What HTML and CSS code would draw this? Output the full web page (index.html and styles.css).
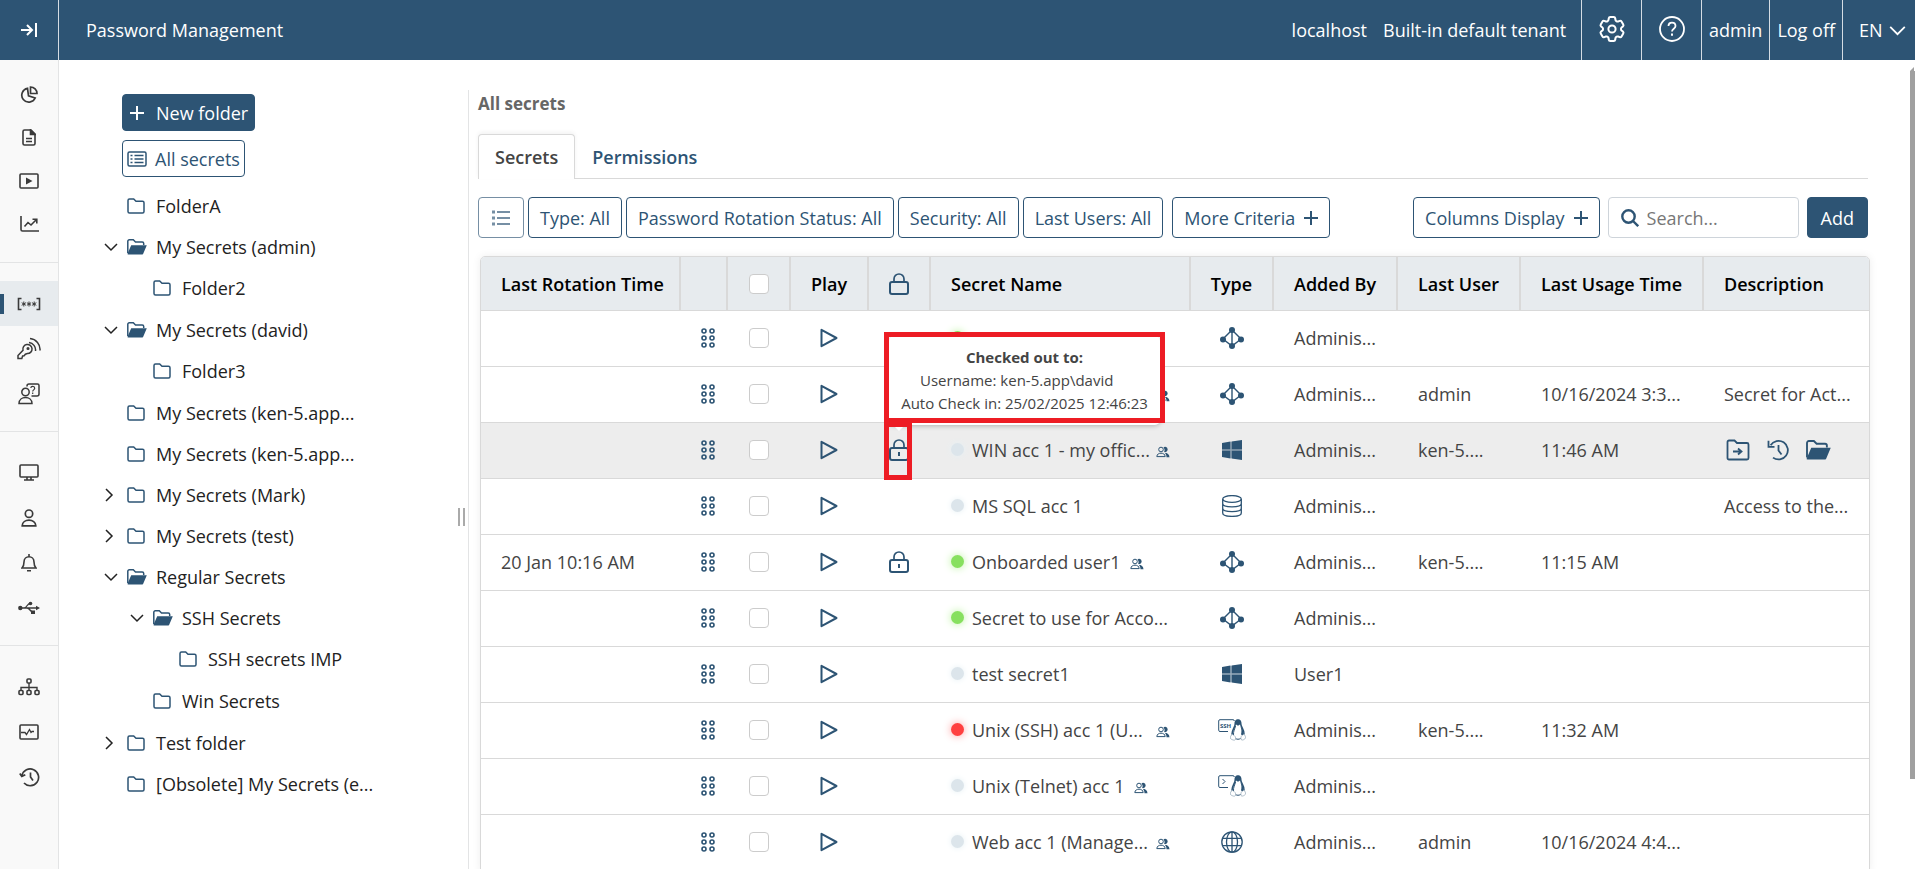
FILE: index.html
```html
<!DOCTYPE html>
<html lang="en">
<head>
    <meta charset="UTF-8">
    <meta name="viewport" content="width=device-width, initial-scale=1.0">
    <title>Password Management</title>
    <link rel="stylesheet" href="styles.css">
</head>
<body>
    <!-- Icon set -->
    <svg class="icon-defs" aria-hidden="true">
        <symbol id="i-folder" viewBox="0 0 18 16"><path d="M1 13.5v-11A1.5 1.5 0 0 1 2.5 1h4.2L9 3.3h6.5A1.5 1.5 0 0 1 17 4.8v8.7a1.5 1.5 0 0 1-1.5 1.5h-13A1.5 1.5 0 0 1 1 13.5z" fill="none" stroke="currentColor" stroke-width="1.5"/></symbol>
        <symbol id="i-folder-open" viewBox="0 0 20 16"><path d="M.8 14V2.3A1.5 1.5 0 0 1 2.3.8h4L8.5 3h6.7a1.5 1.5 0 0 1 1.5 1.5V6" fill="none" stroke="currentColor" stroke-width="1.5"/><path d="M4.2 6.2h15.6l-3.6 8.6a1 1 0 0 1-.9.7H1.2a.7.7 0 0 1-.6-1z" fill="currentColor"/></symbol>
        <symbol id="i-down" viewBox="0 0 14 14"><path d="M1 4l6 6 6-6" fill="none" stroke="currentColor" stroke-width="1.5"/></symbol>
        <symbol id="i-right" viewBox="0 0 14 14"><path d="M2 1l6 6-6 6" fill="none" stroke="currentColor" stroke-width="1.5"/></symbol>
        <symbol id="i-plus" viewBox="0 0 14 14"><path d="M7 0v14M0 7h14" fill="none" stroke="currentColor" stroke-width="2"/></symbol>
        <symbol id="i-lock-open" viewBox="0 0 20 22"><rect x="1" y="9" width="18" height="12" rx="2" fill="none" stroke="currentColor" stroke-width="2"/><path d="M5 9V6a5 5 0 0 1 10 0v3" fill="none" stroke="currentColor" stroke-width="1.7"/></symbol>
        <symbol id="i-lock" viewBox="0 0 20 22"><rect x="1" y="9" width="18" height="12" rx="2" fill="none" stroke="currentColor" stroke-width="2"/><path d="M5 9V6a5 5 0 0 1 10 0v3" fill="none" stroke="currentColor" stroke-width="1.7"/><path d="M10 13v4" stroke="currentColor" stroke-width="2"/></symbol>
        <symbol id="i-drag" viewBox="0 0 14 20"><g fill="none" stroke="currentColor" stroke-width="1.6"><circle cx="3" cy="3" r="2"/><circle cx="11" cy="3" r="2"/><circle cx="3" cy="10" r="2"/><circle cx="11" cy="10" r="2"/><circle cx="3" cy="17" r="2"/><circle cx="11" cy="17" r="2"/></g></symbol>
        <symbol id="i-play" viewBox="0 0 18 20"><path d="M1.5 1.8v16.4L16.5 10z" fill="none" stroke="currentColor" stroke-width="2" stroke-linejoin="round"/></symbol>
        <symbol id="i-users" viewBox="0 0 14 12"><circle cx="5" cy="3.5" r="2.3" fill="none" stroke="currentColor" stroke-width="1"/><path d="M.8 10.6C1 8 3 7.2 5 7.2s4 .8 4.2 3.4z" fill="none" stroke="currentColor" stroke-width="1"/><path d="M7.5 1.4a2.6 2.6 0 1 1 .6 4.5 4 4 0 0 0-.6-4.5zM8.5 6.8c3 0 4.800 1.500 5 4.500h-3c0-2-.6-3.500-2-4.500z" fill="currentColor"/></symbol>
        <symbol id="i-ad" viewBox="0 0 24 22"><path d="M12 3L3 12l9 7 9-7zM12 3v16" fill="none" stroke="currentColor" stroke-width="1.4"/><g fill="currentColor"><circle cx="12" cy="3" r="3"/><circle cx="3" cy="12.5" r="3"/><circle cx="21" cy="12.5" r="3"/><circle cx="12" cy="19" r="3"/></g></symbol>
        <symbol id="i-windows" viewBox="0 0 20 20"><path d="M0 3l8.5-1.4v7.9H0zM9.5 1.4L20 0v9.5H9.5zM0 10.5h8.5v7.9L0 17zM9.5 10.5H20V20L9.500 18.6z" fill="currentColor"/><path d="M0 10h20M9 2v16" stroke="currentColor" stroke-width="1" opacity=".45"/></symbol>
        <symbol id="i-db" viewBox="0 0 20 22"><g fill="none" stroke="currentColor" stroke-width="1.3"><ellipse cx="10" cy="4" rx="9.3" ry="3.4"/><path d="M.7 4v14c0 4.5 18.6 4.5 18.6 0V4M.7 8.5c0 4.5 18.6 4.5 18.6 0M.7 13.2c0 4.5 18.6 4.5 18.6 0"/></g></symbol>
        <symbol id="i-penguin" viewBox="0 0 16 22"><path d="M8 1c2.2 0 2.8 2 2.8 4.2 0 3 3.600 5.400 3.200 10.300M8 1C5.800 1 5.200 3 5.200 5.200c0 3-3.400 5.600-3.200 10.300" fill="none" stroke="currentColor" stroke-width="1.6"/><path d="M5.300 5C5.300 1.500 6.500.8 8 .8s2.800.7 2.800 4.200L8 6.800zM10.500 7.500c2.500 2.500 3.500 6 2.500 9l-2-1c.8-3 .5-5.500-.5-8z" fill="currentColor"/><path d="M5.500 7c-.6 3-2.300 5-2 9M5.500 19.500c1.500 1 3.500 1 5 0" fill="none" stroke="currentColor" stroke-width="1"/><path d="M2.500 15.500C.5 16 .3 18 .5 19.500c1.500 1.500 4 2.300 5 1 1-1.600-1-4.500-3-5zM13.500 15.500c-2 .5-3 2.500-2.500 5 1.500 1.500 4-.5 4.700-1.500-.2-1.500-.7-3.500-2.200-3.500z" fill="#fff" stroke="currentColor" stroke-width=".6" stroke-opacity=".6"/></symbol>
        <symbol id="i-globe" viewBox="0 0 22 22"><g fill="none" stroke="currentColor" stroke-width="1.3"><circle cx="11" cy="11" r="10.2"/><ellipse cx="11" cy="11" rx="5.5" ry="10.2"/><path d="M11 1v20M1.800 7.300h18.400M1.800 14.700h18.400"/></g></symbol>
        <symbol id="i-history" viewBox="0 0 22 22"><path d="M3.6 6.3A9.3 9.3 0 1 1 6 18.6M11.5 6v5.5l3 4" fill="none" stroke="currentColor" stroke-width="1.8"/><path d="M1.500 1.800v6h6" fill="none" stroke="currentColor" stroke-width="1.8"/></symbol>
    </svg>

    <!-- Header -->
    <header class="topbar">
        <button class="menu-toggle" aria-label="Expand menu">
            <svg width="18" height="16" viewBox="0 0 18 16" fill="none" stroke="currentColor" stroke-width="2"><path d="M1 8h11M7 3l5 5-5 5M16 1v14"/></svg>
        </button>
        <div class="app-name">Password Management</div>
        <div class="tenant"><span>localhost</span><span>Built-in default tenant</span></div>
        <button class="top-icon" aria-label="Settings">
            <svg width="32" height="32" viewBox="0 0 24 24" fill="none" stroke="currentColor" stroke-width="1.5"><path d="M9.594 3.94c.09-.542.56-.94 1.11-.94h2.593c.55 0 1.02.398 1.11.94l.213 1.281c.063.374.313.686.645.87.074.04.147.083.22.127.325.196.72.257 1.075.124l1.217-.456a1.125 1.125 0 0 1 1.37.49l1.296 2.247a1.125 1.125 0 0 1-.26 1.431l-1.003.827c-.293.241-.438.613-.43.992a7.723 7.723 0 0 1 0 .255c-.008.378.137.75.43.991l1.004.827c.424.35.534.955.26 1.43l-1.298 2.247a1.125 1.125 0 0 1-1.369.491l-1.217-.456c-.355-.133-.75-.072-1.076.124a6.47 6.47 0 0 1-.22.128c-.331.183-.581.495-.644.869l-.213 1.281c-.09.543-.56.94-1.11.94h-2.594c-.55 0-1.019-.398-1.11-.94l-.213-1.281c-.062-.374-.312-.686-.644-.87a6.52 6.52 0 0 1-.22-.127c-.325-.196-.72-.257-1.076-.124l-1.217.456a1.125 1.125 0 0 1-1.369-.49l-1.297-2.247a1.125 1.125 0 0 1 .26-1.431l1.004-.827c.292-.24.437-.613.43-.991a6.932 6.932 0 0 1 0-.255c.007-.38-.138-.751-.43-.992l-1.004-.827a1.125 1.125 0 0 1-.26-1.43l1.297-2.247a1.125 1.125 0 0 1 1.37-.491l1.216.456c.356.133.751.072 1.076-.124.072-.044.146-.086.22-.128.332-.183.582-.495.644-.869l.214-1.28z"/><circle cx="12" cy="12" r="2.7"/></svg>
        </button>
        <button class="top-icon" aria-label="Help">
            <svg width="26" height="26" viewBox="0 0 26 26" fill="none" stroke="currentColor" stroke-width="1.8"><circle cx="13" cy="13" r="12"/><path d="M9.500 10c0-4.500 7-4.500 7 0 0 2.700-3.500 2.700-3.500 5.500"/><path d="M13 17.500v2.200" stroke-width="2"/></svg>
        </button>
        <a class="top-link" href="#">admin</a>
        <a class="top-link" href="#">Log off</a>
        <button class="language">EN <svg width="17" height="17"><use href="#i-down"/></svg></button>
    </header>

    <div class="page">
        <!-- Left menu -->
        <nav class="sidebar">
            <div class="menu-group first">
                <a href="#" aria-label="Dashboard"><svg width="18" height="18" viewBox="0 0 18 18" fill="none" stroke="currentColor" stroke-width="1.7"><path d="M7.500 2.300A7 7 0 1 0 15.200 12L8.500 9.800z"/><path d="M10.500 1a6.500 6.500 0 0 1 6.500 6.500h-6.500z"/></svg></a>
                <a href="#" aria-label="Reports"><svg width="14" height="17" viewBox="0 0 14 17" fill="none" stroke="currentColor" stroke-width="1.6"><path d="M1 2.500A1.500 1.500 0 0 1 2.500 1H9l4 4v9.500a1.500 1.500 0 0 1-1.500 1.500h-9A1.500 1.500 0 0 1 1 14.500z"/><path d="M8.500 1v4.500H13z" fill="currentColor"/><path d="M4 9.500h6M4 12.500h6" stroke-width="1.4"/></svg></a>
                <a href="#" aria-label="Sessions"><svg width="20" height="16" viewBox="0 0 20 16" fill="none" stroke="currentColor" stroke-width="1.6"><rect x="1" y="1" width="18" height="14" rx="1"/><path d="M7 4.500v7L13.500 8z" fill="currentColor" stroke="none"/></svg></a>
                <a href="#" aria-label="Statistics"><svg width="19" height="17" viewBox="0 0 19 17" fill="none" stroke="currentColor" stroke-width="1.6"><path d="M1 1v13.500A1.500 1.500 0 0 0 2.500 16H19M4.500 11.500L8 7.500l3 2.500 5.500-5.500M12.500 4.300h4.300v4.300"/></svg></a>
            </div>
            <div class="menu-group">
                <a href="#" class="active" aria-label="Password Management"><svg width="24" height="14" viewBox="0 0 24 14" fill="none" stroke="currentColor" stroke-width="1.6"><path d="M4.500 1.500H1.500v11h3M19.500 1.500h3v11h-3"/><path d="M6.800 4.500v5M4.700 5.700l4.200 2.600M8.900 5.700L4.700 8.300M12 4.500v5M9.900 5.700l4.200 2.600M14.100 5.700L9.900 8.300M17.200 4.500v5M15.100 5.700l4.200 2.600M19.300 5.700l-4.200 2.600" stroke-width="1"/></svg></a>
                <a href="#" aria-label="Access keys"><svg width="24" height="24" viewBox="0 0 24 24" fill="none" stroke="currentColor" stroke-width="1.5"><path d="M6 13.200A4.600 4.600 0 1 1 10.400 16.600l-2 .6-1.300 1.500-1.500.3-.8 2.600H1v-3z"/><circle cx="11" cy="11.500" r=".8"/><path d="M12 5.500a7.500 7.500 0 0 1 6.500 8.500M13 1.500a11 11 0 0 1 10 12"/></svg></a>
                <a href="#" aria-label="Access requests"><svg width="22" height="22" viewBox="0 0 22 22" fill="none" stroke="currentColor" stroke-width="1.5"><circle cx="7.500" cy="9" r="3.700"/><path d="M1 20.500c0-8 13-8 13 0z"/><path d="M9 3.500V3a2 2 0 0 1 2-2h8.500a1.500 1.500 0 0 1 1.500 1.500V11a2 2 0 0 1-2 2h-5.500"/><path d="M12.800 5c.2-2.300 3.900-2.200 3.900.2 0 1.700-2 1.600-2 3.300M14.700 9.600v1.300" stroke-width="1.2"/></svg></a>
            </div>
            <div class="menu-group">
                <a href="#" aria-label="Clients"><svg width="20" height="17" viewBox="0 0 20 17" fill="none" stroke="currentColor" stroke-width="1.6"><rect x="1" y="1" width="18" height="12" rx="1"/><path d="M8 13v3M12 13v3M5 16h10"/></svg></a>
                <a href="#" aria-label="Users"><svg width="16" height="18" viewBox="0 0 16 18" fill="none" stroke="currentColor" stroke-width="1.7"><circle cx="8" cy="4.700" r="3.700"/><path d="M1.200 16.800c0-7.500 13.600-7.500 13.600 0z"/></svg></a>
                <a href="#" aria-label="Alerts"><svg width="16" height="18" viewBox="0 0 16 18" fill="none" stroke="currentColor" stroke-width="1.6"><path d="M1 14c2-2 2-3.500 2-6 0-7 10-7 10 0 0 2.500 0 4 2 6zM8 0v2.500M6 16.800h4"/></svg></a>
                <a href="#" aria-label="USB monitoring"><svg width="22" height="14" viewBox="0 0 22 14" fill="none" stroke="currentColor" stroke-width="1.3"><path d="M2 7h18M6 7c3 0 3-4.500 6-4.500M9 7c3 0 3 4 6 4"/><circle cx="2.300" cy="7" r="2.200" fill="currentColor" stroke="none"/><circle cx="12.500" cy="2.500" r="1.800" fill="currentColor" stroke="none"/><path d="M13 9.500h4v3.500h-4zM18 4.800l4 2.200-4 2.200z" fill="currentColor" stroke="none"/></svg></a>
            </div>
            <div class="menu-group last">
                <a href="#" aria-label="Structure"><svg width="22" height="18" viewBox="0 0 22 18" fill="none" stroke="currentColor" stroke-width="1.6"><rect x="9" y="1" width="4" height="4" rx="1"/><rect x="1" y="12.500" width="4" height="4" rx="1"/><rect x="9" y="12.500" width="4" height="4" rx="1"/><rect x="17" y="12.500" width="4" height="4" rx="1"/><path d="M11 5v7.500M3 12.500v-3h16v3" stroke-width="1.4"/></svg></a>
                <a href="#" aria-label="Health"><svg width="20" height="16" viewBox="0 0 20 16" fill="none" stroke="currentColor" stroke-width="1.6"><rect x="1" y="1" width="18" height="14" rx="1"/><path d="M2 8.500h4l1.500 2 3-5 1.500 3 1-1h2" stroke-width="1.3"/></svg></a>
                <a href="#" aria-label="History"><svg width="21" height="20" viewBox="0 0 21 20" fill="none" stroke="currentColor" stroke-width="1.7"><path d="M3 8.500a8.400 8.400 0 1 1 2 7.500M11.500 5.500V10l2.500 3.500M.8 6.500l2 3 3.500-1.800"/></svg></a>
            </div>
        </nav>

        <!-- Folder tree -->
        <aside class="folders">
            <div class="folder-panel">
                <button class="btn btn-primary new-folder"><svg width="14" height="14"><use href="#i-plus"/></svg>New folder</button>
                <button class="btn all-secrets"><svg width="20" height="16" viewBox="0 0 20 16" fill="none" stroke="currentColor" stroke-width="1.5"><rect x="1" y="1" width="18" height="14" rx="1.500"/><path d="M3.500 4.500h2M3.500 8h2M3.500 11.500h2M7.500 4.500h9M7.500 8h9M7.500 11.500h9"/></svg>All secrets</button>
                <ul class="tree">
                    <li><a href="#"><i></i><svg class="folder"><use href="#i-folder"/></svg>FolderA</a></li>
                    <li><a href="#"><i><svg><use href="#i-down"/></svg></i><svg class="folder open"><use href="#i-folder-open"/></svg>My Secrets (admin)</a>
                        <ul>
                            <li><a href="#"><i></i><svg class="folder"><use href="#i-folder"/></svg>Folder2</a></li>
                        </ul>
                    </li>
                    <li><a href="#"><i><svg><use href="#i-down"/></svg></i><svg class="folder open"><use href="#i-folder-open"/></svg>My Secrets (david)</a>
                        <ul>
                            <li><a href="#"><i></i><svg class="folder"><use href="#i-folder"/></svg>Folder3</a></li>
                        </ul>
                    </li>
                    <li><a href="#"><i></i><svg class="folder"><use href="#i-folder"/></svg>My Secrets (ken-5.app...</a></li>
                    <li><a href="#"><i></i><svg class="folder"><use href="#i-folder"/></svg>My Secrets (ken-5.app...</a></li>
                    <li><a href="#"><i><svg><use href="#i-right"/></svg></i><svg class="folder"><use href="#i-folder"/></svg>My Secrets (Mark)</a></li>
                    <li><a href="#"><i><svg><use href="#i-right"/></svg></i><svg class="folder"><use href="#i-folder"/></svg>My Secrets (test)</a></li>
                    <li><a href="#"><i><svg><use href="#i-down"/></svg></i><svg class="folder open"><use href="#i-folder-open"/></svg>Regular Secrets</a>
                        <ul>
                            <li><a href="#"><i><svg><use href="#i-down"/></svg></i><svg class="folder open"><use href="#i-folder-open"/></svg>SSH Secrets</a>
                                <ul>
                                    <li><a href="#"><i></i><svg class="folder"><use href="#i-folder"/></svg>SSH secrets IMP</a></li>
                                </ul>
                            </li>
                            <li><a href="#"><i></i><svg class="folder"><use href="#i-folder"/></svg>Win Secrets</a></li>
                        </ul>
                    </li>
                    <li><a href="#"><i><svg><use href="#i-right"/></svg></i><svg class="folder"><use href="#i-folder"/></svg>Test folder</a></li>
                    <li><a href="#"><i></i><svg class="folder"><use href="#i-folder"/></svg>[Obsolete] My Secrets (e...</a></li>
                </ul>
            </div>
            <div class="splitter"></div>
        </aside>

        <!-- Main content -->
        <main class="content">
            <h1>All secrets</h1>
            <div class="tabs">
                <button class="tab active">Secrets</button>
                <button class="tab">Permissions</button>
            </div>

            <div class="toolbar">
                <button class="btn list-btn" aria-label="Filters"><svg width="18" height="16" viewBox="0 0 18 16" stroke="currentColor" stroke-width="2"><path d="M0 2h3M0 8h3M0 14h3" stroke-width="3"/><path d="M5 2h13M5 8h13M5 14h13"/></svg></button>
                <button class="btn">Type: All</button>
                <button class="btn">Password Rotation Status: All</button>
                <button class="btn">Security: All</button>
                <button class="btn">Last Users: All</button>
                <button class="btn more">More Criteria <svg width="14" height="14"><use href="#i-plus"/></svg></button>
                <div class="toolbar-right">
                    <button class="btn">Columns Display <svg width="14" height="14"><use href="#i-plus"/></svg></button>
                    <label class="search">
                        <svg width="18" height="18" viewBox="0 0 18 18" fill="none" stroke="currentColor" stroke-width="2.4"><circle cx="7.500" cy="7.500" r="6.200"/><path d="M12 12l5.200 5.200"/></svg>
                        <input type="text" placeholder="Search..." aria-label="Search">
                    </label>
                    <button class="btn btn-primary">Add</button>
                </div>
            </div>

            <table class="secrets">
                <colgroup>
                    <col class="c-rotation"><col class="c-drag"><col class="c-check"><col class="c-play"><col class="c-lock"><col class="c-name"><col class="c-type"><col class="c-added"><col class="c-user"><col class="c-usage"><col class="c-desc">
                </colgroup>
                <thead>
                    <tr>
                        <th>Last Rotation Time</th>
                        <th></th>
                        <th class="mid"><input type="checkbox" aria-label="Select all"></th>
                        <th class="mid">Play</th>
                        <th class="mid"><svg class="lock"><use href="#i-lock-open"/></svg></th>
                        <th>Secret Name</th>
                        <th class="mid">Type</th>
                        <th>Added By</th>
                        <th>Last User</th>
                        <th>Last Usage Time</th>
                        <th>Description</th>
                    </tr>
                </thead>
                <tbody>
                    <tr>
                        <td></td>
                        <td class="mid drag"><svg width="14" height="20"><use href="#i-drag"/></svg></td>
                        <td class="mid"><input type="checkbox" aria-label="Select"></td>
                        <td class="mid"><svg width="18" height="20"><use href="#i-play"/></svg></td>
                        <td></td>
                        <td><div class="name"><span class="dot green"></span></div></td>
                        <td class="mid"><svg width="24" height="22"><use href="#i-ad"/></svg></td>
                        <td>Adminis...</td>
                        <td></td>
                        <td></td>
                        <td></td>
                    </tr>
                    <tr>
                        <td></td>
                        <td class="mid drag"><svg width="14" height="20"><use href="#i-drag"/></svg></td>
                        <td class="mid"><input type="checkbox" aria-label="Select"></td>
                        <td class="mid"><svg width="18" height="20"><use href="#i-play"/></svg></td>
                        <td></td>
                        <td><div class="name"><span class="dot"></span><span class="cut"></span><svg class="shared"><use href="#i-users"/></svg></div></td>
                        <td class="mid"><svg width="24" height="22"><use href="#i-ad"/></svg></td>
                        <td>Adminis...</td>
                        <td>admin</td>
                        <td>10/16/2024 3:3...</td>
                        <td>Secret for Act...</td>
                    </tr>
                    <tr class="hovered">
                        <td></td>
                        <td class="mid drag"><svg width="14" height="20"><use href="#i-drag"/></svg></td>
                        <td class="mid"><input type="checkbox" aria-label="Select"></td>
                        <td class="mid"><svg width="18" height="20"><use href="#i-play"/></svg></td>
                        <td class="mid">
                            <div class="lock-wrap">
                                <svg class="lock"><use href="#i-lock"/></svg>
                                <div class="tooltip">
                                    <strong>Checked out to:</strong>
                                    <p>Username: ken-5.app\david&nbsp;&nbsp;&nbsp;&nbsp;</p>
                                    <p>Auto Check in: 25/02/2025 12:46:23</p>
                                </div>
                                <div class="frame frame-tooltip"></div>
                                <div class="frame frame-lock"></div>
                            </div>
                        </td>
                        <td><div class="name"><span class="dot"></span><span class="cut">WIN acc 1 - my offic...</span><svg class="shared"><use href="#i-users"/></svg></div></td>
                        <td class="mid"><svg width="20" height="20"><use href="#i-windows"/></svg></td>
                        <td>Adminis...</td>
                        <td>ken-5....</td>
                        <td>11:46 AM</td>
                        <td>
                            <div class="actions">
                                <button aria-label="Move to folder"><svg width="24" height="22" viewBox="0 0 24 22" fill="none" stroke="currentColor" stroke-width="1.8"><path d="M1.500 19V3A1.500 1.500 0 0 1 3 1.500h5.500L11 4h10a1.500 1.500 0 0 1 1.500 1.500V19a1.500 1.500 0 0 1-1.500 1.500H3A1.500 1.500 0 0 1 1.500 19z"/><path d="M7 12.500h8M12 9.500l3.500 3-3.500 3"/></svg></button>
                                <button aria-label="History"><svg width="22" height="22"><use href="#i-history"/></svg></button>
                                <button aria-label="Open"><svg width="25" height="20"><use href="#i-folder-open"/></svg></button>
                            </div>
                        </td>
                    </tr>
                    <tr>
                        <td></td>
                        <td class="mid drag"><svg width="14" height="20"><use href="#i-drag"/></svg></td>
                        <td class="mid"><input type="checkbox" aria-label="Select"></td>
                        <td class="mid"><svg width="18" height="20"><use href="#i-play"/></svg></td>
                        <td></td>
                        <td><div class="name"><span class="dot"></span><span>MS SQL acc 1</span></div></td>
                        <td class="mid"><svg width="20" height="22"><use href="#i-db"/></svg></td>
                        <td>Adminis...</td>
                        <td></td>
                        <td></td>
                        <td>Access to the...</td>
                    </tr>
                    <tr>
                        <td>20 Jan 10:16 AM</td>
                        <td class="mid drag"><svg width="14" height="20"><use href="#i-drag"/></svg></td>
                        <td class="mid"><input type="checkbox" aria-label="Select"></td>
                        <td class="mid"><svg width="18" height="20"><use href="#i-play"/></svg></td>
                        <td class="mid"><svg class="lock"><use href="#i-lock"/></svg></td>
                        <td><div class="name"><span class="dot green"></span><span>Onboarded user1</span><svg class="shared"><use href="#i-users"/></svg></div></td>
                        <td class="mid"><svg width="24" height="22"><use href="#i-ad"/></svg></td>
                        <td>Adminis...</td>
                        <td>ken-5....</td>
                        <td>11:15 AM</td>
                        <td></td>
                    </tr>
                    <tr>
                        <td></td>
                        <td class="mid drag"><svg width="14" height="20"><use href="#i-drag"/></svg></td>
                        <td class="mid"><input type="checkbox" aria-label="Select"></td>
                        <td class="mid"><svg width="18" height="20"><use href="#i-play"/></svg></td>
                        <td></td>
                        <td><div class="name"><span class="dot green"></span><span>Secret to use for Acco...</span></div></td>
                        <td class="mid"><svg width="24" height="22"><use href="#i-ad"/></svg></td>
                        <td>Adminis...</td>
                        <td></td>
                        <td></td>
                        <td></td>
                    </tr>
                    <tr>
                        <td></td>
                        <td class="mid drag"><svg width="14" height="20"><use href="#i-drag"/></svg></td>
                        <td class="mid"><input type="checkbox" aria-label="Select"></td>
                        <td class="mid"><svg width="18" height="20"><use href="#i-play"/></svg></td>
                        <td></td>
                        <td><div class="name"><span class="dot"></span><span>test secret1</span></div></td>
                        <td class="mid"><svg width="20" height="20"><use href="#i-windows"/></svg></td>
                        <td>User1</td>
                        <td></td>
                        <td></td>
                        <td></td>
                    </tr>
                    <tr>
                        <td></td>
                        <td class="mid drag"><svg width="14" height="20"><use href="#i-drag"/></svg></td>
                        <td class="mid"><input type="checkbox" aria-label="Select"></td>
                        <td class="mid"><svg width="18" height="20"><use href="#i-play"/></svg></td>
                        <td></td>
                        <td><div class="name"><span class="dot red"></span><span class="cut">Unix (SSH) acc 1 (U...</span><svg class="shared"><use href="#i-users"/></svg></div></td>
                        <td class="mid"><svg width="28" height="22" viewBox="0 0 28 22"><path d="M10 12.500H2A1.300 1.300 0 0 1 .7 11.200V2A1.300 1.300 0 0 1 2 .7h13A1.300 1.300 0 0 1 16.300 2" fill="none" stroke="currentColor" stroke-width="1"/><text class="ssh" x="2" y="9">SSH</text><use href="#i-penguin" x="12" y="0" width="16" height="22"/></svg></td>
                        <td>Adminis...</td>
                        <td>ken-5....</td>
                        <td>11:32 AM</td>
                        <td></td>
                    </tr>
                    <tr>
                        <td></td>
                        <td class="mid drag"><svg width="14" height="20"><use href="#i-drag"/></svg></td>
                        <td class="mid"><input type="checkbox" aria-label="Select"></td>
                        <td class="mid"><svg width="18" height="20"><use href="#i-play"/></svg></td>
                        <td></td>
                        <td><div class="name"><span class="dot"></span><span>Unix (Telnet) acc 1</span><svg class="shared"><use href="#i-users"/></svg></div></td>
                        <td class="mid"><svg width="28" height="22" viewBox="0 0 28 22"><path d="M10 12.500H2A1.300 1.300 0 0 1 .7 11.200V2A1.300 1.300 0 0 1 2 .7h13A1.300 1.300 0 0 1 16.300 2M4.500 4l2.500 2.500-2.500 2.500" fill="none" stroke="currentColor" stroke-width="1"/><use href="#i-penguin" x="12" y="0" width="16" height="22"/></svg></td>
                        <td>Adminis...</td>
                        <td></td>
                        <td></td>
                        <td></td>
                    </tr>
                    <tr>
                        <td></td>
                        <td class="mid drag"><svg width="14" height="20"><use href="#i-drag"/></svg></td>
                        <td class="mid"><input type="checkbox" aria-label="Select"></td>
                        <td class="mid"><svg width="18" height="20"><use href="#i-play"/></svg></td>
                        <td></td>
                        <td><div class="name"><span class="dot"></span><span class="cut">Web acc 1 (Manage...</span><svg class="shared"><use href="#i-users"/></svg></div></td>
                        <td class="mid"><svg width="22" height="22"><use href="#i-globe"/></svg></td>
                        <td>Adminis...</td>
                        <td>admin</td>
                        <td>10/16/2024 4:4...</td>
                        <td></td>
                    </tr>
                </tbody>
            </table>
        </main>
        <div class="scrollbar"><div class="scroll-arrow"></div><div class="scroll-thumb"></div></div>
    </div>
</body>
</html>
```

FILE: styles.css
```css
/* General */
* { box-sizing: border-box; }
body { margin: 0; height: 100vh; overflow: hidden; display: flex; flex-direction: column; font-family: "Open Sans", "Noto Sans", sans-serif; font-size: 18px; color: #444; background: #fff; }
button, input { font: inherit; }
button { cursor: pointer; }
a { color: inherit; text-decoration: none; }
svg { flex: none; }
.icon-defs { display: none; }

/* Header */
.topbar { display: flex; flex: none; height: 60px; background: #2d5474; color: #fff; }
.topbar > * { display: flex; align-items: center; justify-content: center; }
.topbar button { background: none; border: 0; color: #fff; }
.topbar .menu-toggle { width: 59px; padding: 0; border-right: 1px solid #d5dde4; }
.topbar .app-name { padding-left: 27px; }
.topbar .tenant { margin-left: auto; gap: 16px; padding-right: 15px; }
.topbar .top-icon { width: 60px; padding: 0 0 2px; border-left: 1px solid #d5dde4; }
.topbar .top-link { padding: 0 7px; border-left: 1px solid #d5dde4; }
.topbar .language { justify-content: flex-start; width: 73px; padding: 0 0 0 16px; gap: 6px; border-left: 1px solid #d5dde4; }

.page { display: flex; flex: 1; min-height: 0; }

/* Left menu */
.sidebar { flex: none; width: 59px; background: #f9f9f9; border-right: 1px solid #e3e4e5; color: #3a3a3a; }
.menu-group { padding: 18px 0 15px; border-bottom: 1px solid #e3e4e5; }
.menu-group a { display: flex; align-items: center; justify-content: center; height: 45px; }
.menu-group a.active { background: linear-gradient(#2d5474, #2d5474) left center / 4px 20px no-repeat #e7ebee; }
.menu-group.first { padding: 13px 0 17px; }
.menu-group.first a { height: 43px; }
.menu-group.last { border-bottom: 0; }

/* Folder tree */
.folders { display: flex; flex: none; width: 410px; margin-top: 30px; border-right: 1px solid #e3e4e5; }
.folder-panel { flex: 1; display: flex; flex-direction: column; align-items: flex-start; padding: 4px 0 0 45px; }
.btn { display: inline-flex; align-items: center; height: 41px; padding: 0 11px; border: 1px solid #2d5474; border-radius: 4px; background: #fff; color: #2d5474; white-space: nowrap; }
.btn-primary { background: #2d5474; color: #fff; }
.new-folder, .all-secrets { height: 37px; margin-left: 18px; }
.new-folder { gap: 12px; padding: 0 6px 0 7px; }
.all-secrets { gap: 8px; padding: 0 4px; }
.all-secrets { margin-top: 9px; }
.tree, .tree ul { list-style: none; margin: 0; padding: 0; color: #222; }
.tree { margin-top: 8px; }
.tree ul { padding: 0 0 1px 26px; }
.tree a { display: flex; align-items: center; height: 41px; white-space: nowrap; }
.tree i { display: flex; width: 23px; }
.tree i svg { width: 14px; height: 14px; }
.tree .folder { width: 18px; height: 16px; margin-right: 11px; color: #2d5474; }
.tree .folder.open { width: 20px; margin-right: 9px; }
.splitter { align-self: center; width: 7px; height: 18px; margin: 74px 3px 0 0; border: solid #aaa; border-width: 0 2px; }

/* Content */
.content { flex: 1; min-width: 0; padding: 30px 42px 0 9px; }
h1 { margin: 0; font-size: 17px; line-height: 28px; font-weight: 700; color: #666; }
.tabs { display: flex; margin-top: 16px; border-bottom: 1px solid #d9d9d9; }
.tab { height: 45px; padding: 0 16px; margin-bottom: -1px; border: 1px solid transparent; border-bottom: 0; background: none; color: #2d5474; font-weight: 600; }
.tab.active { background: #fff; border-color: #d9d9d9; border-radius: 4px 4px 0 0; box-shadow: 0 -2px 4px rgba(0, 0, 0, 0.05); color: #444; }
.toolbar { display: flex; align-items: center; gap: 4px; margin-top: 18px; }
.toolbar .btn svg { margin-left: 9px; }
.toolbar .list-btn { padding: 0 13px; opacity: 0.65; }
.toolbar .list-btn svg { margin: 0; }
.toolbar .more { margin-left: 5px; }
.toolbar-right { display: flex; gap: 8px; margin-left: auto; }
.toolbar-right .btn-primary { padding: 0 13px; }
.search { display: flex; align-items: center; gap: 8px; width: 191px; height: 41px; padding: 0 12px; border: 1px solid #ced4da; border-radius: 4px; color: #2d5474; }
.search input { width: 100%; min-width: 0; border: 0; padding: 0; outline: none; background: none; }
.search input::placeholder { color: #777; }

/* Secrets table */
.secrets { width: 100%; margin: 18px 0 0 2px; table-layout: fixed; border-collapse: separate; border-spacing: 0; border: 1px solid #d9d9d9; border-radius: 5px 5px 0 0; box-shadow: 0 0 8px rgba(0, 0, 0, 0.07); }
.c-rotation { width: 200px; }
.c-drag { width: 47px; }
.c-check { width: 63px; }
.c-play { width: 78px; }
.c-lock { width: 62px; }
.c-type { width: 83px; }
.c-added { width: 124px; }
.c-user { width: 123px; }
.c-usage { width: 183px; }
.c-desc { width: 165px; }
.secrets th { height: 54px; padding: 0 0 0 20px; background: #e7ebee; border-right: 2px solid #d9d9d9; border-bottom: 1px solid #d9d9d9; color: #000; font-weight: 600; text-align: left; white-space: nowrap; }
.secrets th:first-child { border-top-left-radius: 4px; }
.secrets th:last-child { border-right: 0; border-top-right-radius: 4px; }
.secrets td { height: 56px; padding: 0 0 2px 20px; border-bottom: 1px solid #d9d9d9; white-space: nowrap; }
.secrets .mid { padding-left: 0; text-align: center; }
.secrets td.mid { padding-right: 2px; }
.secrets td.drag { padding-left: 8px; }
.secrets svg { display: block; color: #2d5474; }
.secrets .mid > svg { margin: 0 auto; }
.secrets .lock { width: 20px; height: 22px; }
.secrets .ssh { font-size: 6px; font-weight: 700; fill: #2d5474; }
.secrets input { appearance: none; display: block; width: 20px; height: 20px; margin: 0 auto; background: #fff; border: 1px solid #ccc; border-radius: 4px; }
.hovered td { background: #ededed; }
.name { display: flex; align-items: center; }
.dot { flex: none; width: 13px; height: 13px; margin-right: 8px; border-radius: 50%; background: #dce5eb; box-shadow: 0 0 6px #e6f0f4; }
.dot.green { background: #87e05f; box-shadow: 0 0 8px #b8f09c; }
.dot.red { background: #ff4040; box-shadow: 0 0 8px #ff9a9a; }
.name .cut { width: 174px; }
.secrets .shared { width: 14px; height: 12px; margin: 4px 0 0 10px; }
.actions { display: flex; align-items: center; gap: 17px; padding-left: 2px; }
.actions button { display: flex; padding: 0; border: 0; background: none; }

/* Checked out tooltip */
.lock-wrap { position: relative; width: 20px; margin: 0 auto; }
.tooltip { position: absolute; z-index: 1; left: 0; bottom: 36px; width: 271px; padding: 10px 4px; border-radius: 5px; background: #fff; box-shadow: 0 1px 5px rgba(0, 0, 0, 0.25); font-size: 15px; line-height: 23px; text-align: center; }
.tooltip strong { font-weight: 700; }
.tooltip p { margin: 0; }
.tooltip::after { content: ""; position: absolute; left: 4px; top: 100%; border: 6px solid transparent; border-top-color: #fff; }
.frame { position: absolute; z-index: 2; border: 5px solid #ed1c24; }
.frame-tooltip { left: -5px; bottom: 38px; width: 281px; height: 91px; }
.frame-lock { left: -5px; bottom: -19px; width: 28px; height: 58px; }

/* Page scrollbar */
.scrollbar { flex: none; width: 5px; padding-top: 5px; }
.scroll-arrow { width: 0; height: 6px; border: solid transparent; border-width: 0 0 4px 4px; border-bottom-color: #a0a0a0; }
.scroll-thumb { height: 88%; background: #a0a0a0; }
```
